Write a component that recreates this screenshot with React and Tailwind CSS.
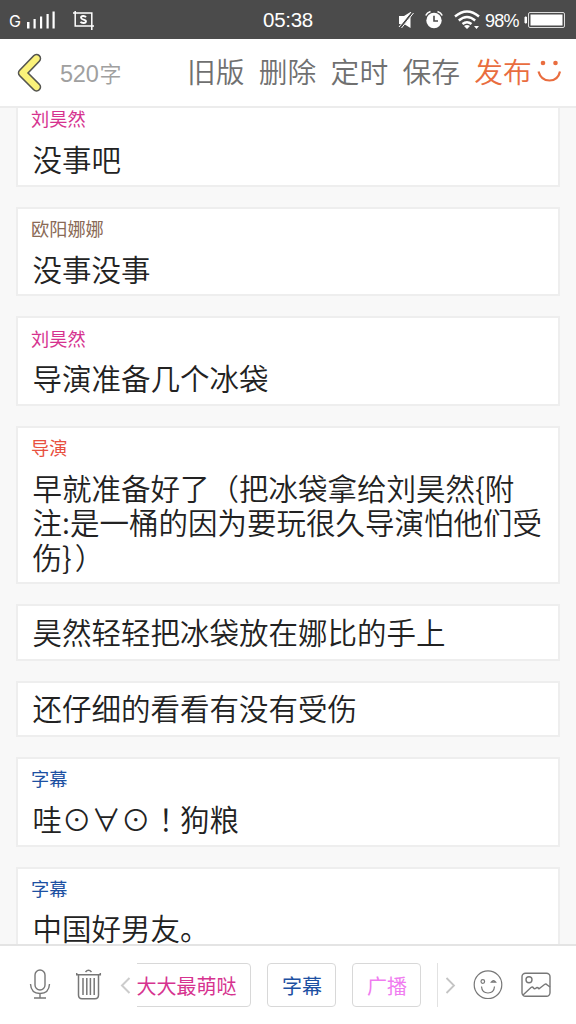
const messages = [
  { name: '刘昊然', color: 'text-[#d6338f]', text: '没事吧', size: 'h-[89.67px]' },
  { name: '欧阳娜娜', color: 'text-[#8a6a56]', text: '没事没事', size: 'h-[89.67px]' },
  { name: '刘昊然', color: 'text-[#d6338f]', text: '导演准备几个冰袋', size: 'h-[89.67px]' },
  {
    name: '导演',
    color: 'text-[#e8503f]',
    text: ['早就准备好了（把冰袋拿给刘昊然{附', '注:是一桶的因为要玩很久导演怕他们受', '伤}）'],
    size: 'h-[158.4px]',
  },
  { text: '昊然轻轻把冰袋放在娜比的手上', size: 'h-[56.2px]' },
  { text: '还仔细的看看有没有受伤', size: 'h-[56.2px]' },
  { name: '字幕', color: 'text-[#1d50a2]', text: '哇⊙∀⊙！狗粮', size: 'h-[89.67px]' },
  { name: '字幕', color: 'text-[#1d50a2]', text: '中国好男友。', size: 'h-[89.67px]' },
];

function StatusBar() {
  return (
    <div className="flex h-[39px] shrink-0 items-center bg-[#4b4b4b] text-white">
      <div className="flex w-[192px] items-center pl-[9px]">
        <span className="w-[17px] pt-[3px] font-['Inter','Liberation_Sans',sans-serif] text-[16px] leading-none">G</span>
        <svg width="30" height="20" viewBox="0 0 30 20" fill="#fff">
          <rect x="1" y="12" width="2.5" height="6.5" />
          <rect x="7.5" y="9" width="2.2" height="9.5" />
          <rect x="14" y="6.5" width="2.2" height="12" />
          <rect x="20.5" y="4" width="2.2" height="14.5" />
          <rect x="26.5" y="1.5" width="2.2" height="17" />
        </svg>
        <svg className="ml-[17px]" width="22" height="20" viewBox="0 0 22 20" fill="none" stroke="#fff" strokeWidth="1.5">
          <path d="M0 3H18.8V20M2.2 1V16H21" />
          <path d="M13 7.2C12 5.6 8 5.4 8 7.8C8 10 13 9 13 11.3C13 13.6 8.5 13.4 7.5 11.8" strokeWidth="1.8" />
        </svg>
      </div>
      <div className="w-[192px] pt-[2px] text-center font-['Liberation_Sans',sans-serif] text-[20.5px] leading-none tracking-[-0.3px]">05:38</div>
      <div className="flex w-[192px] items-center">
        <svg className="ml-[14px]" width="17" height="18" viewBox="0 0 17 18">
          <path d="M1 5H6L12.5 1V17L6 13H1Z" fill="#fff" />
          <path d="M2.5 16.5L14.5 1.5" stroke="#4b4b4b" strokeWidth="2.6" />
          <path d="M1 16L13 1M3.5 17L15.5 2" stroke="#fff" strokeWidth="1" />
        </svg>
        <svg className="ml-[10px]" width="18" height="19" viewBox="0 0 18 19">
          <circle cx="9" cy="10.5" r="7.7" fill="#fff" />
          <path d="M0.8 5.5Q2 2.5 5.5 1.5M12.5 1.5Q16 2.5 17.2 5.5" fill="none" stroke="#fff" strokeWidth="1.6" />
          <path d="M9 5.8V11H13" fill="none" stroke="#4b4b4b" strokeWidth="1.6" />
        </svg>
        <svg className="ml-[11px]" width="27" height="19" viewBox="0 0 27 19" fill="none" stroke="#fff" strokeWidth="2.4">
          <path d="M1 6.5Q13 -3.5 25 6.5M4.8 10.5Q13 3.5 21.2 10.5M8.5 14Q13 10.3 17.5 14" />
          <path d="M10 16Q13 13.8 16 16L13 19ZM20 16H25L22.5 19Z" fill="#fff" stroke="none" />
        </svg>
        <span className="ml-[4px] w-[36px] pt-[2px] font-['Liberation_Sans',sans-serif] text-[18px] leading-none tracking-[-0.8px]">98%</span>
        <svg className="ml-[3px]" width="42" height="18" viewBox="0 0 42 18">
          <path d="M2.5 6H1V12H2.5Z" fill="#fff" stroke="#fff" />
          <rect x="4.5" y="1.5" width="36" height="15" rx="1.5" fill="none" stroke="#ddd" />
          <rect x="6.5" y="3.5" width="32" height="11" fill="#fff" />
        </svg>
      </div>
    </div>
  );
}

function Header() {
  return (
    <header className="flex h-[69px] shrink-0 items-center border-b-2 border-[#ececec] bg-white font-[350]">
      <svg className="ml-[16px]" width="27" height="42" viewBox="0 0 27 42" fill="none" strokeLinecap="round" strokeLinejoin="round">
        <path d="M20.5 6.5L6.5 21L20.5 35" stroke="#555550" strokeWidth="9.5" />
        <path d="M20.5 6.5L6.5 21L20.5 35" stroke="#fbf27a" strokeWidth="6.2" />
      </svg>
      <span className="ml-[17px] w-[127px] pt-[3px] text-[#a0a0a0]">
        <span className="font-['Liberation_Sans',sans-serif] text-[23.5px] tracking-[-0.2px]">520</span>
        <span className="ml-px text-[22px]">字</span>
      </span>
      <nav className="flex gap-[14.2px] whitespace-nowrap pb-[3px] text-[28.8px] leading-none text-[#707070]">
        <span>旧版</span>
        <span>删除</span>
        <span>定时</span>
        <span>保存</span>
        <span className="text-[#e96d3f]">发布</span>
      </nav>
      <svg className="mb-[3px] ml-[5px]" width="25" height="24" viewBox="0 0 25 24" fill="none" stroke="#e96d3f">
        <circle cx="6" cy="4" r="2.3" fill="#e96d3f" stroke="none" />
        <circle cx="18.5" cy="4" r="2.3" fill="#e96d3f" stroke="none" />
        <path d="M1.5 12.5Q4 21.5 12.5 21.5Q21 21.5 23 12.5" strokeWidth="2.2" />
      </svg>
    </header>
  );
}

// Closing brackets and exclamation marks sit nearer the middle of their cell.
const shifts = { '）': 'pl-[3px]', '！': '-mr-[8px] pl-[8px]' };

function Line({ children }) {
  return (
    <div>
      {children.split(/([）！])/).map((part, index) =>
        shifts[part] ? (
          <span key={index} className={shifts[part]}>{part}</span>
        ) : (
          part
        ),
      )}
    </div>
  );
}

function Message({ name, color, text, size }) {
  const lines = Array.isArray(text) ? text : [text];
  return (
    <article className={`${size} shrink-0 border-2 border-[#eeeeee] bg-white pl-[13px]`}>
      {name && <div className={`${color} mt-[8.2px] h-[22px] text-[18.2px] leading-[22px]`}>{name}</div>}
      <div className={`${name ? 'mt-[11.6px]' : 'mt-[7.8px]'} ml-[1.5px] whitespace-nowrap text-[29.5px] leading-[34.4px] font-[350] text-[#222]`}>
        {lines.map((line) => (
          <Line key={line}>{line}</Line>
        ))}
      </div>
    </article>
  );
}

function Chip({ className, children }) {
  return (
    <button className={`flex h-[44px] shrink-0 items-center justify-center rounded-[4px] border-[1.5px] border-[#d8d8d8] pt-px pl-px text-[20px] ${className}`}>
      {children}
    </button>
  );
}

function Footer() {
  return (
    <footer className="flex h-[80px] shrink-0 items-center border-t-2 border-[#e4e4e4] bg-white">
      <svg className="ml-[29px]" width="22" height="32" viewBox="0 0 22 32" fill="none" stroke="#777" strokeWidth="1.4">
        <rect x="6" y="1" width="10" height="20" rx="5" />
        <path d="M1.5 15Q2 24.5 11 24.5Q20 24.5 20.5 15M11 24.5V29M5 29H17" />
      </svg>
      <svg className="ml-[25px]" width="26" height="32" viewBox="0 0 26 32" fill="none" stroke="#777" strokeWidth="1.5">
        <path d="M0.7 4V5.7H24.3V4M9.5 3Q12.5 -0.5 15.5 3M2.5 6V26Q2.5 29.7 6 29.7H19Q22.5 29.7 22.5 26V6M7 9V26M10.8 9V26M14.4 9V26M18.2 9V26" />
      </svg>
      <svg className="ml-[18px]" width="11" height="18" viewBox="0 0 11 18" fill="none" stroke="#ccc" strokeWidth="2">
        <path d="M9.5 2L2 9.5L9.5 17" />
      </svg>
      <div className="ml-[6px] flex w-[284px] justify-end gap-[16px] overflow-hidden">
        <Chip className="w-[130px] text-[#d6338f]">大大最萌哒</Chip>
        <Chip className="w-[69px] text-[#1d50a2]">字幕</Chip>
        <Chip className="w-[69px] text-[#f07cf0]">广播</Chip>
      </div>
      <div className="ml-[16px] h-[44px] w-px bg-[#e2e2e2]" />
      <svg className="ml-[7px]" width="11" height="18" viewBox="0 0 11 18" fill="none" stroke="#c4c4c4" strokeWidth="1.8">
        <path d="M1.5 2L9 9.5L1.5 17" />
      </svg>
      <svg className="ml-[17px]" width="30" height="30" viewBox="0 0 30 30" fill="none" stroke="#777" strokeWidth="1.2">
        <circle cx="15" cy="14.7" r="13.8" />
        <circle cx="9.8" cy="11.5" r="1.8" />
        <path d="M18.3 12.2Q20.5 9 22.7 12.2ZM8.5 16.5Q9 23 15 23Q21 23 21.5 16.5" />
      </svg>
      <svg className="ml-[18px]" width="30" height="26" viewBox="0 0 30 26" fill="none" stroke="#777" strokeWidth="1.4">
        <rect x="1" y="1.2" width="28" height="23" rx="3.5" />
        <circle cx="8" cy="7.7" r="3" />
        <path d="M2 23L10 15.5Q11.5 14.5 12.5 16Q13.5 17.5 15 16L16 15.5Q17 15.5 18 16.7L23.5 12.5Q25 11.6 26 12.7L29 15" />
      </svg>
    </footer>
  );
}

export default function App() {
  return (
    <div className="flex h-[1024px] w-[576px] flex-col overflow-hidden bg-[#f8f8f8] font-['Noto_Sans_CJK_SC',sans-serif]">
      <StatusBar />
      <Header />
      <main className="min-h-0 flex-1 overflow-hidden">
        <div className="-mt-[10.9px] flex flex-col gap-5 px-4">
          {messages.map((message, index) => (
            <Message key={index} {...message} />
          ))}
        </div>
      </main>
      <Footer />
    </div>
  );
}
